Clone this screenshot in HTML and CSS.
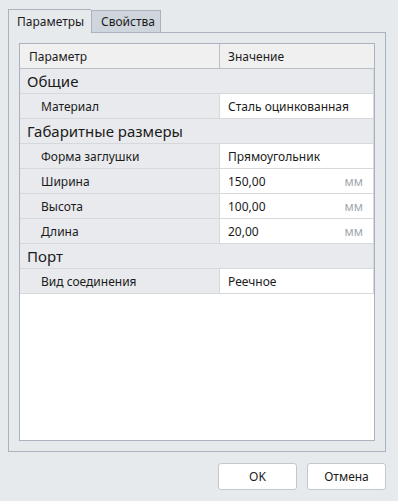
FILE: index.html
```html
<!DOCTYPE html>
<html lang="ru">
<head>
    <meta charset="UTF-8">
    <title>Параметры</title>
    <link rel="stylesheet" href="styles.css">
</head>
<body>
    <div class="dialog">
        <div class="tabs">
            <div class="tab active">Параметры</div>
            <div class="tab">Свойства</div>
        </div>
        <div class="panel">
            <div class="grid">
                <div class="row head">
                    <div class="cell name">Параметр</div>
                    <div class="cell value">Значение</div>
                </div>

                <div class="row group">Общие</div>
                <div class="row">
                    <div class="cell name">Материал</div>
                    <div class="cell value">Сталь оцинкованная</div>
                </div>

                <div class="row group">Габаритные размеры</div>
                <div class="row">
                    <div class="cell name">Форма заглушки</div>
                    <div class="cell value">Прямоугольник</div>
                </div>
                <div class="row">
                    <div class="cell name">Ширина</div>
                    <div class="cell value">150,00<span class="unit">мм</span></div>
                </div>
                <div class="row">
                    <div class="cell name">Высота</div>
                    <div class="cell value">100,00<span class="unit">мм</span></div>
                </div>
                <div class="row">
                    <div class="cell name">Длина</div>
                    <div class="cell value">20,00<span class="unit">мм</span></div>
                </div>

                <div class="row group">Порт</div>
                <div class="row">
                    <div class="cell name">Вид соединения</div>
                    <div class="cell value">Реечное</div>
                </div>
            </div>
        </div>
        <div class="buttons">
            <button class="btn">OK</button>
            <button class="btn">Отмена</button>
        </div>
    </div>
</body>
</html>
```

FILE: styles.css
```css
body {
    margin: 0;
    background: #e7eaed;
    font-family: "Noto Sans", "Open Sans", sans-serif;
    font-size: 12px;
    color: #1b1b1b;
}

.dialog {
    padding: 9px 12px 0 8px;
}

.tabs {
    display: flex;
    align-items: flex-end;
    height: 23px;
}

.tab {
    box-sizing: border-box;
    width: 70px;
    height: 22px;
    line-height: 21px;
    padding-left: 9px;
    white-space: nowrap;
    border: 1px solid #aab3bd;
    border-bottom: none;
    background: #cfd5dc;
}

.tab.active {
    width: 83px;
    height: 24px;
    line-height: 24px;
    padding-left: 8px;
    background: #e7eaed;
    margin-bottom: -1px;
    position: relative;
    z-index: 1;
    border-right: none;
}

.panel {
    height: 398px;
    border: 1px solid #aab3bd;
    padding: 10px;
    display: flex;
    flex-direction: column;
}

.grid {
    flex: 1;
    background: #fff;
    border: 1px solid #aab3bd;
}

.row {
    display: flex;
    height: 24px;
    border-bottom: 1px solid #d6d9dc;
    border-right: 1px solid #d6d9dc;
    background: #e8eaed;
}

.cell {
    display: flex;
    align-items: center;
}

.name {
    box-sizing: border-box;
    width: 199px;
    padding-left: 21px;
    white-space: nowrap;
}

.value {
    flex: 1;
    padding: 0 10px 0 8px;
    background: #fff;
    border-left: 1px solid #d6d9dc;
}

.unit {
    margin-left: auto;
    color: #a3a7ab;
}

.row.head {
    background: #f0f0f0;
    border-bottom-color: #b9bfc5;
    border-right: none;
}

.head .name {
    padding-left: 9px;
}

.head .value {
    background: #f0f0f0;
    border-left-color: #b9bfc5;
}

.row.group {
    align-items: center;
    padding-left: 7px;
    font-size: 15px;
}

.buttons {
    display: flex;
    justify-content: flex-end;
    gap: 10px;
    margin-top: 11px;
}

.btn {
    width: 79px;
    height: 27px;
    background: #fff;
    border: 1px solid #c3c8ce;
    border-radius: 3px;
    font-family: inherit;
    font-size: 12px;
    color: #1b1b1b;
}
```
